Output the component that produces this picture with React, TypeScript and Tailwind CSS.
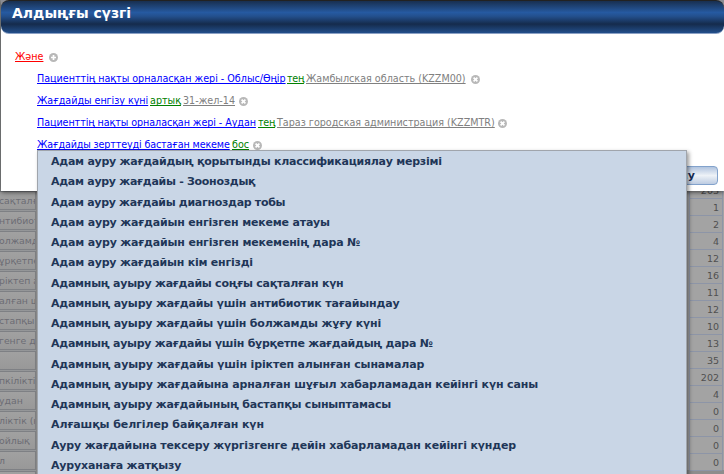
const leftRows = [
  'сақталға', 'нтибиоти', 'олжамды', 'ұрқетпе', 'ріктеп ал', 'алған шұ', 'стапқы с', 'генге де', '', 'пкілікті', 'удан', 'ліктік (ң', 'ойлық', 'л', '',
];

const counts = ['1', '2', '4', '12', '16', '11', '12', '10', '13', '35', '202', '4', '0', '0', '0', '0'];

const fields = [
  { text: 'Адам ауру жағдайдың қорытынды классификациялау мерзімі', cls: 'tracking-[-0.25px]' },
  { text: 'Адам ауру жағдайы - Зооноздық', cls: 'tracking-[-0.28px]' },
  { text: 'Адам ауру жағдайы диагноздар тобы', cls: 'tracking-[-0.3px]' },
  { text: 'Адам ауру жағдайын енгізген мекеме атауы', cls: 'tracking-[-0.19px]' },
  { text: 'Адам ауру жағдайын енгізген мекеменің дара №', cls: 'tracking-[-0.18px]' },
  { text: 'Адам ауру жағдайын кім енгізді', cls: 'tracking-[-0.22px]' },
  { text: 'Адамның ауыру жағдайы соңғы сақталған күн', cls: 'tracking-[-0.25px]' },
  { text: 'Адамның ауыру жағдайы үшін антибиотик тағайындау', cls: 'tracking-[-0.18px]' },
  { text: 'Адамның ауыру жағдайы үшін болжамды жұғу күні', cls: 'tracking-[-0.18px]' },
  { text: 'Адамның ауыру жағдайы үшін бұрқетпе жағдайдың дара №', cls: 'tracking-[-0.26px]' },
  { text: 'Адамның ауыру жағдайы үшін іріктеп алынған сынамалар', cls: 'tracking-[-0.15px]' },
  { text: 'Адамның ауыру жағдайына арналған шұғыл хабарламадан кейінгі күн саны', cls: 'tracking-[-0.14px]' },
  { text: 'Адамның ауыру жағдайының бастапқы сыныптамасы', cls: 'tracking-[-0.19px]' },
  { text: 'Алғашқы белгілер байқалған күн', cls: 'tracking-[-0.09px]' },
  { text: 'Ауру жағдайына тексеру жүргізгенге дейін хабарламадан кейінгі күндер', cls: 'tracking-[-0.16px]' },
  { text: 'Ауруханаға жатқызу', cls: 'tracking-[-0.17px]' },
];

const conditions = [
  { field: 'Пациенттің нақты орналасқан жері - Облыс/Өңір', fw: 'w-[248px] tracking-[-0.01px]', op: 'тең', ow: 'w-[17px] tracking-[-0.3px]', value: 'Жамбылская область (KZZM00)', vw: 'w-[161px]' },
  { field: 'Жағдайды енгізу күні', fw: 'w-[111px] tracking-[-0.04px]', op: 'артық', ow: 'w-[31px]', value: '31-жел-14', vw: 'w-[52px]' },
  { field: 'Пациенттің нақты орналасқан жері - Аудан', fw: 'w-[219px] tracking-[-0.07px]', op: 'тең', ow: 'w-[17px] tracking-[-0.3px]', value: 'Тараз городская администрация (KZZMTR)', vw: 'w-[217px]' },
  { field: 'Жағдайды зерттеуді бастаған мекеме', fw: 'w-[193px] tracking-[-0.14px]', op: 'бос', ow: 'w-[17px]', value: '', vw: '' },
];

function RoundIcon({ kind }: { kind: 'add' | 'remove' }) {
  return (
    <svg className="block size-[9px] shrink-0" viewBox="0 0 9 9">
      <circle cx="4.5" cy="4.5" r="4.5" fill="#b8b8b8" />
      <path
        d={kind === 'add' ? 'M4.5 2v5M2 4.5h5' : 'M2.6 2.6l3.8 3.8M6.4 2.6L2.6 6.4'}
        stroke="#fff"
        strokeWidth="1.7"
      />
    </svg>
  );
}

function Term({ text, width, color }: { text: string; width: string; color: string }) {
  return (
    <span
      className={`${width} ${color} h-[12px] shrink-0 text-[9.6px] leading-[12px] whitespace-nowrap underline decoration-1 underline-offset-1 [text-decoration-skip-ink:none]`}
    >
      {text}
    </span>
  );
}

export default function App() {
  return (
    <div className="relative h-[474px] w-[724px] overflow-hidden bg-[#8d8d8d] font-['DejaVu_Sans',sans-serif] text-[10px]">
      <div className="flex h-full justify-between">
        <div className="flex w-[36px] flex-col gap-px overflow-hidden bg-[#949698] pt-[191px]">
          {leftRows.map((text, i) => (
            <div
              key={i}
              className="h-[19px] shrink-0 overflow-hidden border border-l-0 border-[#7e8084] bg-linear-to-b from-[#a1a1a1] to-[#989898] text-[9.3px] leading-[18px] whitespace-nowrap text-[#6c6c74]"
            >
              <span className="-ml-px">{text}</span>
            </div>
          ))}
        </div>
        <div className="flex w-[38px] flex-col pt-[182px]">
          <div className="h-[288px] border-l border-[#8c919e] bg-[#a3a3a3] pl-[2px]">
            <div className="mr-px h-full border-x border-[#8d95a7]">
              {['203', ...counts].map((n, i) => (
                <div
                  key={i}
                  className="h-[17px] border-b border-[#8d95a7] pr-[3px] text-right text-[9.5px] leading-[18px] text-[#505050]"
                >
                  {n}
                </div>
              ))}
            </div>
          </div>
        </div>
      </div>

      <section className="absolute top-0 left-[1px] h-[191px] w-[723px] bg-white shadow-[0_1px_5px_rgba(0,0,0,0.65)]">
        <div className="h-[34px] bg-linear-to-b from-[#8b8d94] from-50% to-white to-50%">
          <h1 className="h-[34px] rounded-[8px] border-t border-b border-t-[#222] border-b-[#8aa0c4] bg-[linear-gradient(#182f50_0%,#265aa1_36%,#234f8c_48%,#152b4c_72%,#224f8b_100%)] pl-[11px] text-[14px] leading-[25px] font-bold text-white">
            <span className="whitespace-nowrap">Алдыңғы сүзгі</span>
          </h1>
        </div>
        <div className="pl-[14px]">
          <div className="flex items-center gap-[6px] pt-[17px]">
            <Term text="Және" width="w-[28px]" color="text-[#f00]" />
            <RoundIcon kind="add" />
          </div>
          <div className="flex flex-col gap-[10px] pt-[10px] pl-[22px]">
            {conditions.map((c) => (
              <div key={c.field} className="flex h-[12px] items-center gap-[2px]">
                <Term text={c.field} width={c.fw} color="text-[#00f]" />
                <Term text={c.op} width={c.ow} color="text-[#008000]" />
                {c.value && <Term text={c.value} width={c.vw} color="text-[#808080]" />}
                <span className="pl-[2px]">
                  <RoundIcon kind="remove" />
                </span>
              </div>
            ))}
          </div>
        </div>
        <div className="flex justify-end pt-[15px] pr-[6px]">
          <button className="h-[19px] w-[90px] rounded-[4px] border border-[#82a2cc] bg-linear-to-b from-[#b1c4df] via-[#eef2f7] to-[#bdcce2] pr-[22px] text-right text-[11px] leading-[17px] font-bold text-[#172b53]">
            Қолдану
          </button>
        </div>
      </section>

      <ul className="absolute top-[150px] left-[37px] w-[650px] border border-[#a0a5ac] bg-[#c9d6e6] pt-px pb-[20px] pl-[13px] text-[11px] font-bold text-[#1f3658] shadow-[2px_2px_4px_rgba(0,0,0,0.4)]">
        {fields.map((f) => (
          <li key={f.text} className="h-[20.27px] leading-[20px]">
            <span className={`whitespace-nowrap ${f.cls}`}>{f.text}</span>
          </li>
        ))}
      </ul>
    </div>
  );
}
